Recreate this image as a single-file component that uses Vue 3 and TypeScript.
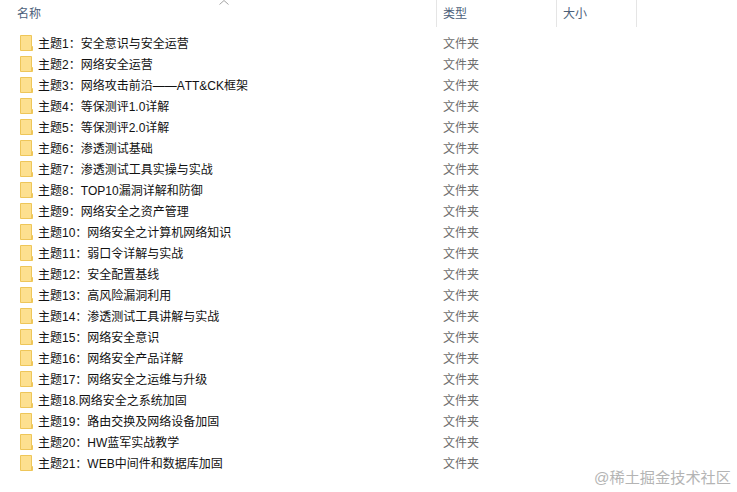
<script setup lang="ts">
const colon = '\uFF1A'
const topics: string[] = [
  `主题1${colon}安全意识与安全运营`,
  `主题2${colon}网络安全运营`,
  `主题3${colon}网络攻击前沿——ATT&CK框架`,
  `主题4${colon}等保测评1.0详解`,
  `主题5${colon}等保测评2.0详解`,
  `主题6${colon}渗透测试基础`,
  `主题7${colon}渗透测试工具实操与实战`,
  `主题8${colon}TOP10漏洞详解和防御`,
  `主题9${colon}网络安全之资产管理`,
  `主题10${colon}网络安全之计算机网络知识`,
  `主题11${colon}弱口令详解与实战`,
  `主题12${colon}安全配置基线`,
  `主题13${colon}高风险漏洞利用`,
  `主题14${colon}渗透测试工具讲解与实战`,
  `主题15${colon}网络安全意识`,
  `主题16${colon}网络安全产品详解`,
  `主题17${colon}网络安全之运维与升级`,
  '主题18.网络安全之系统加固',
  `主题19${colon}路由交换及网络设备加固`,
  `主题20${colon}HW蓝军实战教学`,
  `主题21${colon}WEB中间件和数据库加固`,
]
</script>

<template>
  <div class="explorer">
    <div class="head">
      <div class="col col-name">名称<span class="sort"><svg width="10" height="5" viewBox="0 0 10 5"><path d="M0.5 4.5 5 0.5 9.5 4.5" fill="none" stroke="#a3a3a3" /></svg></span></div>
      <div class="col col-type">类型</div>
      <div class="col col-size">大小</div>
    </div>
    <ul class="rows">
      <li v-for="t in topics" :key="t" class="row">
        <svg class="folder" width="13" height="16" viewBox="0 0 13 16">
          <path d="M0.5 0.5H11.5V11.5H12.5V15.5H0.5Z" fill="#fde08f" stroke="#eec659" />
          <path d="M11.5 11.5V15.5" stroke="#eec659" />
        </svg>
        <span class="name">{{ t }}</span>
        <span class="kind">文件夹</span>
      </li>
    </ul>
    <div class="mark">@稀土掘金技术社区</div>
  </div>
</template>

<style scoped>
.explorer {
  position: relative;
  width: 737px;
  height: 492px;
  overflow: hidden;
  background: #fff;
  font-family: "Liberation Sans", "Noto Sans CJK SC", sans-serif;
  font-size: 12px;
  font-kerning: none;
}
.head {
  display: flex;
  height: 27px;
  color: #4c607a;
}
.col {
  position: relative;
  box-sizing: border-box;
  line-height: 29px;
  border-right: 1px solid #e5e5e5;
  padding-left: 6px;
}
.col-name {
  width: 437px;
  padding-left: 17px;
}
.col-type {
  width: 120px;
}
.col-size {
  width: 80px;
}
.sort {
  position: absolute;
  left: 219px;
  top: 0;
  line-height: 0;
}
.rows {
  list-style: none;
  margin: 0;
  padding: 5px 0 0 20px;
}
.row {
  display: flex;
  align-items: center;
  height: 21px;
}
.folder {
  flex: none;
  margin-right: 5px;
}
.name {
  width: 405px;
  color: #111;
  white-space: nowrap;
}
.kind {
  color: #6d6d6d;
}
.mark {
  position: absolute;
  right: 6px;
  bottom: 5px;
  color: #b4b4b4;
  font-size: 15.2px;
}
</style>

<style>
html, body {
  margin: 0;
  background: #fff;
}
</style>
